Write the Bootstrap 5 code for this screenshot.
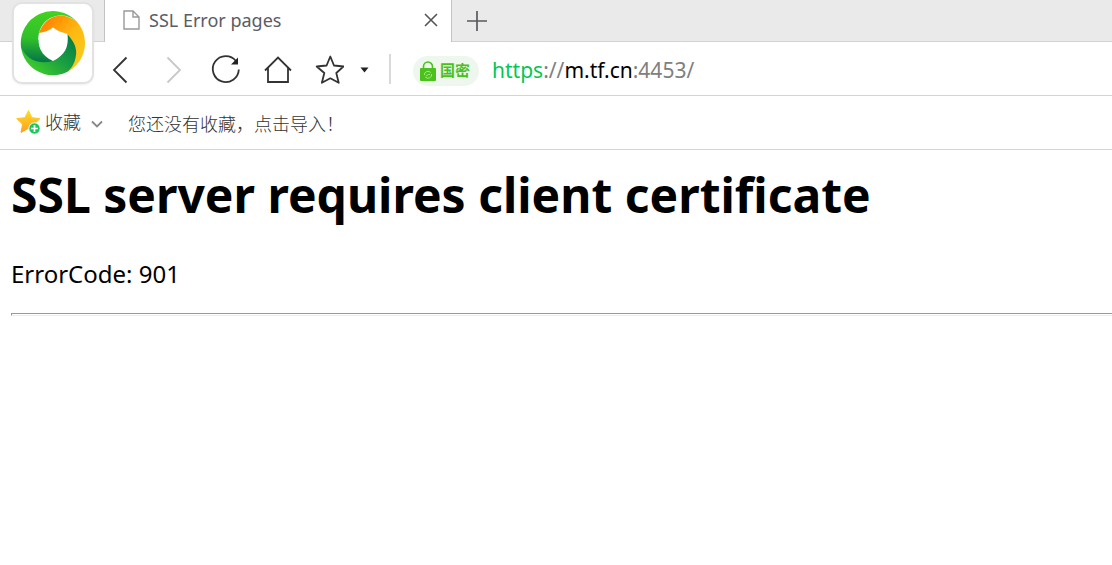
<!DOCTYPE html>
<html lang="zh-CN">
<head>
<meta charset="utf-8">
<meta name="viewport" content="width=device-width, initial-scale=1">
<title>SSL Error pages</title>
<link href="https://cdn.jsdelivr.net/npm/bootstrap@5.3.0/dist/css/bootstrap.min.css" rel="stylesheet">
<style>
  body { font-family: "Noto Sans", "Noto Sans CJK SC", sans-serif; color: #000; background: #fff; }
  svg { display: block; flex: none; }
  .icon-btn { display: flex; align-items: center; justify-content: center; padding: 0; border: 0; background: none; }
  .tab-strip { height: 42px; background: linear-gradient(#d2d2d2, #d2d2d2) bottom / 100% 1px no-repeat #eaeaea; }
  .tab-lead { width: 105px; border-right: 1px solid #c4c4c4; }
  .tab-page { width: 346px; background: #fff; color: #5a5c64; font-size: 18px; line-height: 24px; padding: 0 12px 2px 17px; gap: 8px; }
  .tab-new { width: 50px; border-left: 1px solid #c4c4c4; }
  .app-logo { position: absolute; left: 12px; top: 2px; width: 82px; height: 82px; background: #fff; border: 2px solid #e2e2e2; border-radius: 10px; box-shadow: 0 1px 2px #0001; }
  .tool-row { height: 54px; border-bottom: 1px solid #d4d4d4; padding: 2px 0 0 104px; }
  .tool-row .nav-btn { width: 32px; height: 32px; margin-right: 20px; }
  .tool-row .star-btn { margin-right: 0; }
  .rule-v { width: 2px; height: 30px; background: #d9d9d9; margin: 0 22px 2px 20px; }
  .sm-pill { height: 30px; width: 66px; padding-left: 7px; gap: 4px; background: #edf7ee; border-radius: 15px; color: #4bc11b; font-size: 15px; font-weight: 700; white-space: nowrap; margin: 2px 13px 0 0; }
  .address { font-size: 21px; color: #808080; outline: 0; white-space: nowrap; padding-top: 2px; }
  .address .scheme { color: #00c853; }
  .address .host { color: #000; }
  .fav-row { height: 54px; border-bottom: 1px solid #d4d4d4; padding-left: 16px; font-size: 18px; color: #333; }
  .fav-row, .fav-row button { font-family: "Noto Sans CJK SC", sans-serif; font-weight: 300; }
  .fav-row button { color: inherit; gap: 4px; padding-bottom: 2px; }
  .fav-row a { color: inherit; text-decoration: none; margin-left: 24px; padding-top: 1px; }
  main { padding: 15px 0 0 11px; }
  h1 { font-size: 48px; line-height: 60px; font-weight: 700; margin: 0 0 31px; }
  .err-code { font-size: 24px; line-height: 36px; margin: 0 0 21px; }
  .inset-rule { margin: 0; border: 1px solid #999; border-color: #999 transparent #eee #999; border-right: 0; height: 3px; opacity: 1; }
</style>
</head>
<body>
<header class="position-relative">
  <div class="tab-strip d-flex">
    <div class="tab-lead flex-shrink-0"></div>
    <div class="tab-page d-flex align-items-center">
      <svg width="19" height="22" viewBox="0 0 19 22" fill="none" stroke="#999" stroke-width="1.4"><path d="M2 2h9l6 6v12H2zM11 2v6h6"/></svg>
      <span class="flex-grow-1">SSL Error pages</span>
      <button class="icon-btn" aria-label="Close tab"><svg width="16" height="16" viewBox="0 0 16 16" stroke="#555" stroke-width="1.600"><path d="M2 2l12 12M14 2L2 14"/></svg></button>
    </div>
    <button class="icon-btn tab-new" aria-label="New tab"><svg width="20" height="20" viewBox="0 0 20 20" stroke="#5a5a5e" stroke-width="1.700"><path d="M10 0v20M0 10h20"/></svg></button>
  </div>

  <div class="tool-row d-flex align-items-center">
    <button class="icon-btn nav-btn" aria-label="Back"><svg width="32" height="32" viewBox="0 0 32 32" fill="none" stroke="#333" stroke-width="1.800"><path d="M22.500 3.500L10 16 22.500 28.500"/></svg></button>
    <button class="icon-btn nav-btn" aria-label="Forward"><svg width="32" height="32" viewBox="0 0 32 32" fill="none" stroke="#c8c8c8" stroke-width="1.800"><path d="M11.500 3.500L24 16 11.500 28.500"/></svg></button>
    <button class="icon-btn nav-btn" aria-label="Reload"><svg width="32" height="32" viewBox="0 0 32 32" fill="none" stroke="#333" stroke-width="1.800"><path d="M30.800 15.500A13 13 0 1 1 28 7"/><path d="M30 3.500v7h-7z" fill="#222" stroke="none"/></svg></button>
    <button class="icon-btn nav-btn" aria-label="Home"><svg width="32" height="32" viewBox="0 0 32 32" fill="none" stroke="#333" stroke-width="1.800"><path d="M5 16.500L18 3.500l13 13M8 13.500V28h20V13.500"/></svg></button>
    <button class="icon-btn nav-btn star-btn" aria-label="Add to favorites"><svg width="32" height="32" viewBox="0 0 32 32" fill="none" stroke="#333" stroke-width="1.800" stroke-linejoin="round"><path d="M18.300 2.500l3.700 9 9.500 1-7.200 6.500 2.400 9.800-8.400-4.500-8.400 4.500L12.300 19l-7.600-6.500 9.900-1z"/></svg></button>
    <button class="icon-btn ms-3" aria-label="Favorites menu"><svg width="9" height="6" viewBox="0 0 9 6"><path d="M0.500 0.500h8L4.500 5.500z" fill="#222"/></svg></button>
    <div class="rule-v"></div>
    <div class="sm-pill d-flex align-items-center">
      <svg width="16" height="20" viewBox="0 0 16 20"><path d="M3.500 9V5.500a4.500 4.500 0 0 1 9 0V9" fill="none" stroke="#4bc11b" stroke-width="1.600"/><rect y="7" width="16" height="13" rx="1" fill="#4bc11b"/><g fill="none" stroke="#b4e69f" stroke-width=".9"><path d="M4.300 14a3.700 3.700 0 0 1 6.500-2.400M11.700 13a3.700 3.700 0 0 1-6.500 2.900"/><path d="M6 14.500c1 1 1.500-1.500 4-1"/></g></svg>
      <span>国密</span>
    </div>
    <div class="address flex-grow-1" role="textbox" contenteditable="true" spellcheck="false" aria-label="Address"><span class="scheme">https</span>://<span class="host">m.tf.cn</span>:4453/</div>
  </div>

  <div class="fav-row d-flex align-items-center">
    <button class="icon-btn">
      <svg width="25" height="26" viewBox="0 0 25 26"><defs><linearGradient id="gold" x2="0" y2="1"><stop stop-color="#ffdc28"/><stop offset="1" stop-color="#ff9f1a"/></linearGradient></defs><path d="M12.500 1.500l3.300 7.200 8.200.9-6 5.600 1.800 8-7.300-4-7.500 4.200 1.700-8.200-6-5.600 8.300-.9z" fill="url(#gold)" stroke="url(#gold)" stroke-linejoin="round"/><circle cx="18.500" cy="19.500" r="5.700" fill="#1cc75a" stroke="#fff"/><path d="M18.500 16v7M15 19.500h7" stroke="#fff" stroke-width="1.700"/></svg>
      <span>收藏</span>
      <svg class="ms-1 mt-1" width="15" height="8" viewBox="0 0 15 8" fill="none" stroke="#888" stroke-width="1.800"><path d="M3 1.500l5 5 5-5"/></svg>
    </button>
    <a href="#">您还没有收藏，点击导入！</a>
  </div>

  <button class="icon-btn app-logo" aria-label="Browser menu">
    <svg width="68" height="68" viewBox="0 0 68 68">
      <defs>
        <linearGradient id="sweep" gradientUnits="userSpaceOnUse" x1="24" y1="14" x2="62" y2="50"><stop stop-color="#ff8400"/><stop offset=".55" stop-color="#ffb912"/><stop offset="1" stop-color="#f6cb1c"/></linearGradient>
        <linearGradient id="lower" x1="1" y1=".1" x2=".15" y2=".8"><stop stop-color="#047a45"/><stop offset=".5" stop-color="#1a9e42"/><stop offset="1" stop-color="#3ecb2b"/></linearGradient>
        <linearGradient id="upper" x1=".5" y1="0" x2=".45" y2="1"><stop stop-color="#42d321"/><stop offset=".55" stop-color="#2fbf2a"/><stop offset="1" stop-color="#04744a"/></linearGradient>
      </defs>
      <path d="M20 24C26 6 44 2 57.500 12.300A32.200 32.200 0 0 1 48 63L34 34z" fill="url(#sweep)"/>
      <path d="M48 25C54 31 58 38 57 46C56 54 53 59 48 63A32.200 32.200 0 0 1 2 38L22 30z" fill="url(#lower)"/>
      <path d="M2 38A32.200 32.200 0 0 1 57.500 12.300C44 1 24 7 20 24C18 38 22 47 34 52C20 56 8 51 2 38z" fill="url(#upper)"/>
      <path d="M34 18.500Q40 23 48.500 25C50 38 46 46 34 52C22 46 18 38 20 24Q28 23 34 18.500z" fill="#fff"/>
    </svg>
  </button>
</header>

<main>
  <h1>SSL server requires client certificate</h1>
  <p class="err-code">ErrorCode: 901</p>
  <hr class="inset-rule">
</main>
<script src="https://cdn.jsdelivr.net/npm/bootstrap@5.3.0/dist/js/bootstrap.bundle.min.js"></script>
</body>
</html>
